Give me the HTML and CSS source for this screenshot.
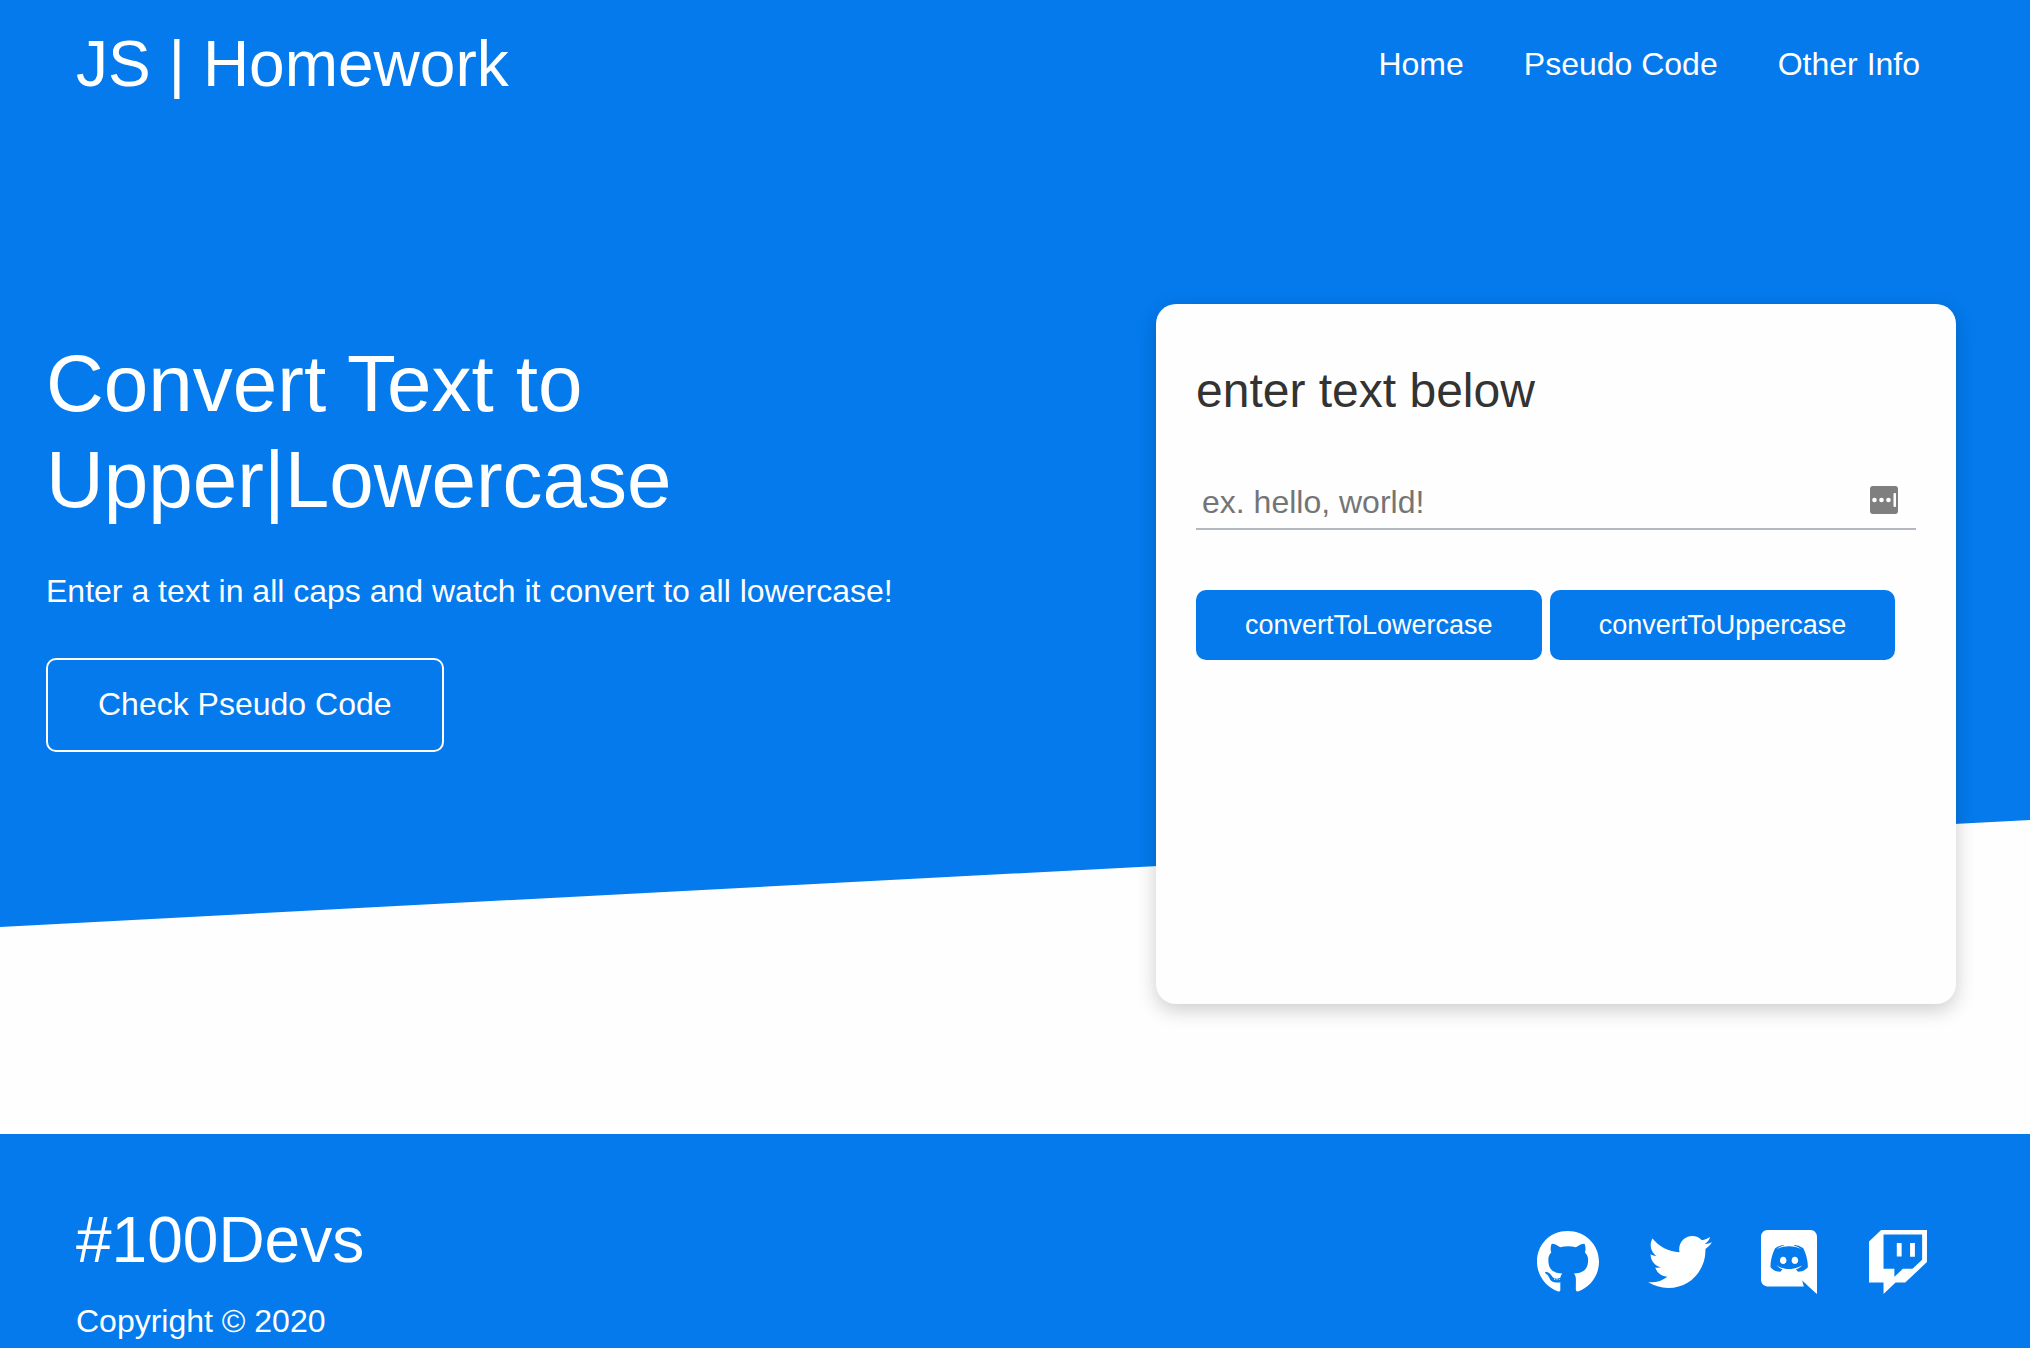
FILE: index.html
```html
<!DOCTYPE html>
<html lang="en">
<head>
  <meta charset="utf-8">
  <meta name="viewport" content="width=device-width, initial-scale=1">
  <title>JS | Homework</title>
  <link rel="stylesheet" href="styles.css">
</head>
<body>
  <div class="showcase">
    <header class="navbar">
      <div class="logo">JS | Homework</div>
      <nav>
        <ul class="nav-links">
          <li><a href="#home">Home</a></li>
          <li><a href="#pseudo">Pseudo Code</a></li>
          <li><a href="#info">Other Info</a></li>
        </ul>
      </nav>
    </header>

    <main class="hero" id="home">
      <section class="intro">
        <h1>Convert Text to Upper|Lowercase</h1>
        <p>Enter a text in all caps and watch it convert to all lowercase!</p>
        <a class="btn-outline" href="#pseudo">Check Pseudo Code</a>
      </section>

      <form class="card">
        <h2><label for="text">enter text below</label></h2>
        <div class="field">
          <input id="text" type="text" placeholder="ex. hello, world!">
          <svg class="field-icon" viewBox="0 0 28 28" aria-hidden="true">
            <rect width="28" height="28" rx="3" fill="#7f7f7f"/>
            <circle cx="4.500" cy="14" r="2.300" fill="#fff"/>
            <circle cx="11.500" cy="14" r="2.300" fill="#fff"/>
            <circle cx="18.500" cy="14" r="2.300" fill="#fff"/>
            <rect x="23.500" y="7" width="2.500" height="14" rx="1" fill="#fff"/>
          </svg>
        </div>
        <div class="actions">
          <button class="btn" type="button">convertToLowercase</button>
          <button class="btn" type="button">convertToUppercase</button>
        </div>
      </form>
    </main>
  </div>

  <footer class="footer">
    <div>
      <h2>#100Devs</h2>
      <p>Copyright © 2020</p>
    </div>
    <div class="social">
      <a href="#github" aria-label="GitHub"><svg viewBox="0 0 496 512"><path d="M165.9 397.4c0 2-2.3 3.6-5.2 3.6-3.3.3-5.6-1.3-5.6-3.6 0-2 2.3-3.6 5.2-3.6 3-.3 5.6 1.3 5.6 3.6zm-31.1-4.5c-.7 2 1.300 4.300 4.300 4.900 2.600 1 5.600 0 6.200-2s-1.300-4.300-4.300-5.200c-2.600-.7-5.500.3-6.200 2.300zm44.200-1.700c-2.900.7-4.900 2.600-4.600 4.900.3 2 2.900 3.300 5.900 2.600 2.900-.7 4.900-2.600 4.600-4.600-.3-1.900-3-3.200-5.900-2.900zM244.800 8C106.100 8 0 113.300 0 252c0 110.900 69.800 205.800 169.500 239.200 12.800 2.300 17.300-5.600 17.300-12.100 0-6.200-.3-40.400-.3-61.400 0 0-70 15-84.700-29.800 0 0-11.400-29.100-27.800-36.600 0 0-22.900-15.700 1.600-15.400 0 0 24.900 2 38.600 25.800 21.900 38.600 58.600 27.500 72.900 20.900 2.300-16 8.800-27.100 16-33.700-55.900-6.200-112.300-14.300-112.300-110.500 0-27.500 7.600-41.300 23.600-58.900-2.600-6.500-11.100-33.300 2.600-67.900 20.900-6.500 69 27 69 27 20-5.600 41.500-8.500 62.800-8.500s42.800 2.900 62.800 8.500c0 0 48.100-33.600 69-27 13.700 34.700 5.200 61.400 2.600 67.900 16 17.700 25.800 31.500 25.800 58.900 0 96.500-58.900 104.200-114.800 110.500 9.200 7.900 17 22.900 17 46.400 0 33.700-.3 75.400-.3 83.600 0 6.500 4.600 14.400 17.300 12.100C428.200 457.800 496 362.900 496 252 496 113.300 383.500 8 244.800 8z"/></svg></a>
      <a href="#twitter" aria-label="Twitter"><svg viewBox="0 0 512 512"><path d="M459.37 151.716c.325 4.548.325 9.097.325 13.645 0 138.72-105.583 298.558-298.558 298.558-59.452 0-114.68-17.219-161.137-47.106 8.447.974 16.568 1.299 25.340 1.299 49.055 0 94.213-16.568 130.274-44.832-46.132-.975-84.792-31.188-98.112-72.772 6.498.974 12.995 1.624 19.818 1.624 9.421 0 18.843-1.300 27.614-3.573-48.081-9.747-84.143-51.980-84.143-102.985v-1.299c13.969 7.797 30.214 12.670 47.431 13.319-28.264-18.843-46.781-51.005-46.781-87.391 0-19.492 5.197-37.360 14.294-52.954 51.655 63.675 129.300 105.258 216.365 109.807-1.624-7.797-2.599-15.918-2.599-24.040 0-57.828 46.782-104.934 104.934-104.934 30.213 0 57.502 12.670 76.670 33.137 23.715-4.548 46.456-13.320 66.599-25.340-7.798 24.366-24.366 44.833-46.132 57.827 21.117-2.273 41.584-8.122 60.426-16.243-14.292 20.791-32.161 39.308-52.628 54.253z"/></svg></a>
      <a href="#discord" aria-label="Discord"><svg viewBox="0 0 448 512"><path d="M297.216 243.2c0 15.616-11.520 28.416-26.112 28.416-14.336 0-26.112-12.800-26.112-28.416s11.520-28.416 26.112-28.416c14.592 0 26.112 12.800 26.112 28.416zm-119.552-28.416c-14.592 0-26.112 12.800-26.112 28.416s11.776 28.416 26.112 28.416c14.592 0 26.112-12.800 26.112-28.416.256-15.616-11.520-28.416-26.112-28.416zM448 52.736V512c-64.494-56.994-43.868-38.128-118.784-107.776l13.568 47.360H52.480C23.552 451.584 0 428.032 0 398.848V52.736C0 23.552 23.552 0 52.480 0h343.040C424.448 0 448 23.552 448 52.736zm-72.960 242.688c0-82.432-36.864-149.248-36.864-149.248-36.864-27.648-71.936-26.880-71.936-26.880l-3.584 4.096c43.520 13.312 63.744 32.512 63.744 32.512-60.811-33.329-132.244-33.335-191.232-7.424-9.472 4.352-15.104 7.424-15.104 7.424s21.248-20.224 67.328-33.536l-2.560-3.072s-35.072-.768-71.936 26.880c0 0-36.864 66.816-36.864 149.248 0 0 21.504 37.120 78.080 38.912 0 0 9.472-11.520 17.152-21.248-32.512-9.728-44.800-30.208-44.800-30.208 3.766 2.636 9.976 6.053 10.496 6.400 43.210 24.198 104.588 32.126 159.744 8.960 8.960-3.328 18.944-8.192 29.440-15.104 0 0-12.800 20.992-46.336 30.464 7.680 9.728 16.896 20.736 16.896 20.736 56.576-1.792 78.336-38.912 78.336-38.912z"/></svg></a>
      <a href="#twitch" aria-label="Twitch"><svg viewBox="0 0 512 512"><path d="M391.17 103.47H352.54v109.7h38.63ZM285 103H246.37V212.75H285ZM120.83 0 24.31 91.42V420.58H140.14V512l96.53-91.42h77.25L487.69 256V0ZM449.07 237.75l-77.22 73.12H294.61l-67.6 64v-64H140.14V36.58H449.07Z"/></svg></a>
    </div>
  </footer>
</body>
</html>
```
FILE: styles.css
```css
:root {
  --primary: #047aed;
  --light: #fff;
}

* {
  box-sizing: border-box;
  margin: 0;
  padding: 0;
}

body {
  display: flex;
  flex-direction: column;
  min-height: 100vh;
  background: #fefefe;
  color: #333;
  font-family: "Liberation Sans", Arial, sans-serif;
  font-size: 32px;
  line-height: 48px;
}

h1,
h2 {
  font-weight: 300;
}

a {
  color: var(--light);
  text-decoration: none;
}

ul {
  list-style: none;
}

/* Blue backdrop with the slanted lower edge */
.showcase {
  position: relative;
  z-index: 0;
}

.showcase::before {
  content: "";
  position: absolute;
  inset: 0 0 207px;
  z-index: -1;
  background: var(--primary);
  clip-path: polygon(0 0, 100% 0, 100% calc(100% - 107px), 0 100%);
}

.navbar {
  display: flex;
  align-items: center;
  justify-content: space-between;
  padding: 26px 110px 26px 76px;
  color: var(--light);
}

.logo,
.footer h2 {
  font-size: 64px;
  line-height: 76px;
}

.nav-links {
  display: flex;
  gap: 60px;
}

.hero {
  display: flex;
  align-items: flex-start;
  justify-content: space-between;
  gap: 60px;
  padding: 176px 74px 130px 46px;
}

.intro {
  flex: 0 1 860px;
  padding-top: 32px;
  color: var(--light);
}

.intro h1 {
  max-width: 700px;
  margin-bottom: 39px;
  font-size: 80px;
  line-height: 96px;
}

.btn-outline {
  display: inline-block;
  margin-top: 43px;
  padding: 20px 50px 22px;
  border: 2px solid var(--light);
  border-radius: 10px;
}

.card {
  flex: 0 1 800px;
  min-height: 700px;
  padding: 58px 40px;
  border-radius: 20px;
  background: #fefefe;
  box-shadow: 0 6px 20px rgba(0, 0, 0, 0.2);
}

.card h2 {
  margin-bottom: 58px;
  font-size: 48px;
  line-height: 58px;
}

.field {
  position: relative;
  display: flex;
  margin-bottom: 60px;
}

.field input {
  width: 100%;
  padding: 6px 6px 7px;
  border: 0;
  border-bottom: 2px solid #b4b8c4;
  background: transparent;
  color: #333;
  font: inherit;
  line-height: 37px;
  outline: 0;
}

.field input::placeholder {
  color: #757575;
}

.field-icon {
  position: absolute;
  top: 8px;
  right: 18px;
  width: 28px;
  height: 28px;
}

.actions {
  display: flex;
  gap: 8px;
}

.btn {
  height: 70px;
  padding: 0 49px;
  border: 0;
  border-radius: 10px;
  background: var(--primary);
  color: var(--light);
  font-family: inherit;
  font-size: 27px;
  cursor: pointer;
}

.footer {
  display: flex;
  flex: 1;
  align-items: flex-start;
  justify-content: space-between;
  padding: 68px 100px 0 76px;
  background: var(--primary);
  color: var(--light);
}

.footer h2 {
  margin-bottom: 19px;
}

.social {
  display: flex;
  gap: 49px;
  padding-top: 28px;
}

.social svg {
  display: block;
  height: 64px;
  fill: currentColor;
}
```
